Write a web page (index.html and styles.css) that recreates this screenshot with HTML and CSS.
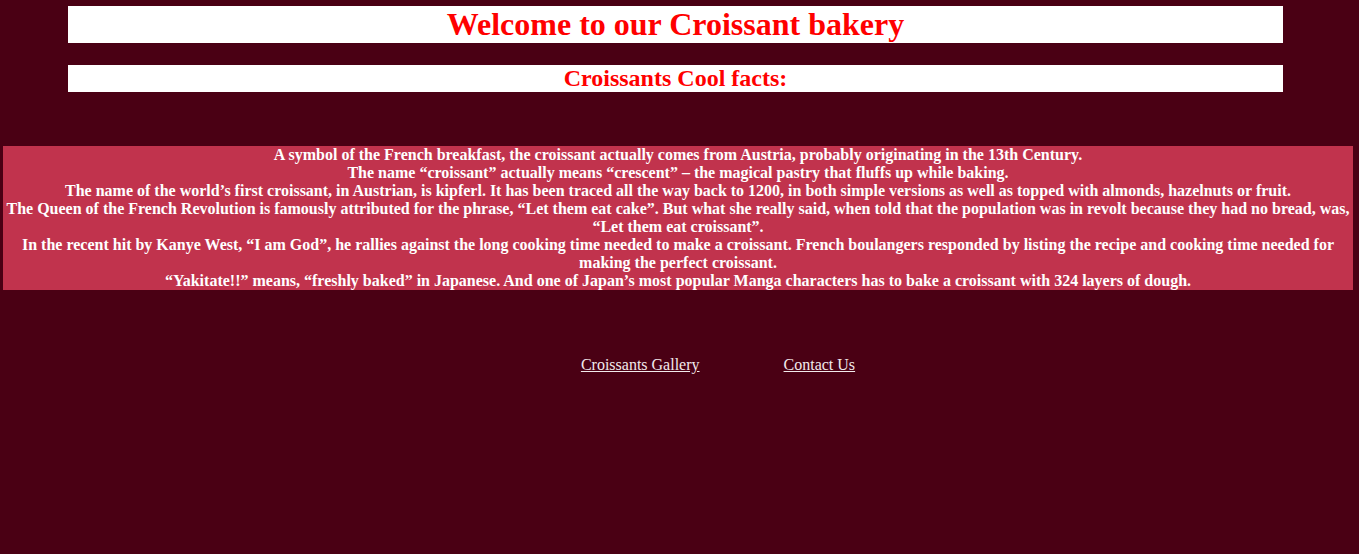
FILE: index.html
```html
<!DOCTYPE html>
<html>
<head>
<meta charset="utf-8">
<title>Croissant bakery</title>
<link rel="stylesheet" href="styles.css">
</head>
<body>
<header class="title-box">
  <h1 class="title">Welcome to our Croissant bakery</h1>
</header>
<div class="sub-box">
  <h2 class="subtitle">Croissants Cool facts:</h2>
</div>
<section class="facts">
  <p>A symbol of the French breakfast, the croissant actually comes from Austria, probably originating in the 13th Century.</p>
  <p>The name “croissant” actually means “crescent” – the magical pastry that fluffs up while baking.</p>
  <p>The name of the world’s first croissant, in Austrian, is kipferl. It has been traced all the way back to 1200, in both simple versions as well as topped with almonds, hazelnuts or fruit.</p>
  <p>The Queen of the French Revolution is famously attributed for the phrase, “Let them eat cake”. But what she really said, when told that the population was in revolt because they had no bread, was, “Let them eat croissant”.</p>
  <p>In the recent hit by Kanye West, “I am God”, he rallies against the long cooking time needed to make a croissant. French boulangers responded by listing the recipe and cooking time needed for making the perfect croissant.</p>
  <p>“Yakitate!!” means, “freshly baked” in Japanese. And one of Japan’s most popular Manga characters has to bake a croissant with 324 layers of dough.</p>
</section>
<nav class="links">
  <a class="link" href="#">Croissants Gallery</a> <a class="link" href="#">Contact Us</a>
</nav>
</body>
</html>
```

FILE: styles.css
```css
html, body {
  margin: 0;
  padding: 0;
}
body {
  background: #4a0014;
  font-family: "Liberation Serif", "Times New Roman", serif;
  width: 1359px;
  height: 554px;
}
.title-box {
  background: #ffffff;
  margin: 6px 76px 0 68px;
  text-align: center;
}
.title {
  margin: 0;
  font-size: 32px;
  line-height: 37px;
  font-weight: bold;
  color: #ff0000;
}
.sub-box {
  background: #ffffff;
  margin: 22px 76px 0 68px;
  text-align: center;
}
.subtitle {
  margin: 0;
  font-size: 24px;
  line-height: 27px;
  font-weight: bold;
  color: #ff0000;
}
.facts {
  background: #c1334d;
  margin: 54px 6px 0 3px;
  text-align: center;
  color: #ffffff;
  font-weight: bold;
  font-size: 16px;
  line-height: 18px;
  padding: 0 2px;
}
.facts p {
  margin: 0;
}
.links {
  margin: 66px 6px 0 3px;
  text-align: center;
  font-size: 16px;
  line-height: 18px;
}
.link {
  color: #f2eaec;
  text-decoration: underline;
  margin-left: 80px;
}
```
